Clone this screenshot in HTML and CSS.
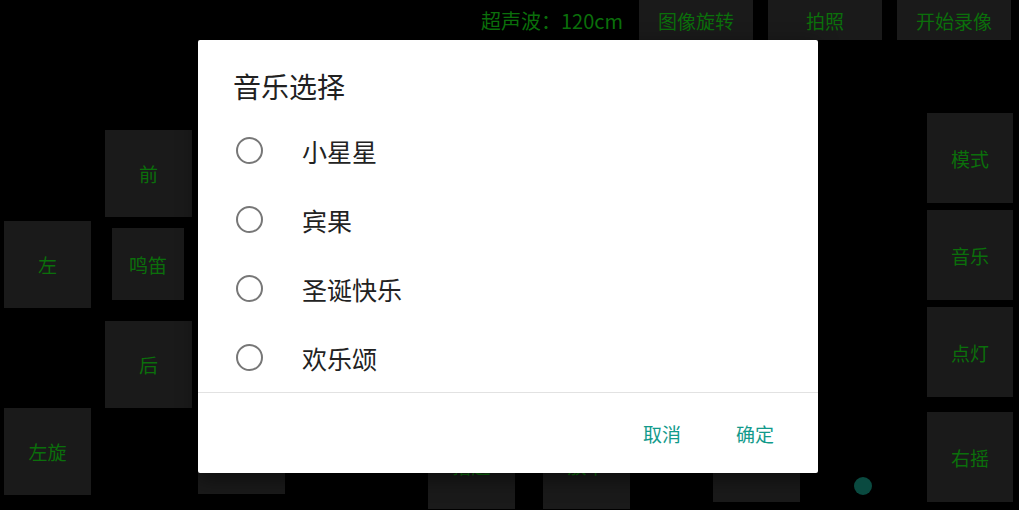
FILE: index.html
```html
<!DOCTYPE html>
<html lang="zh-CN">
<head>
    <meta charset="UTF-8">
    <meta name="viewport" content="width=device-width, initial-scale=1.0">
    <title>小车控制</title>
    <link rel="stylesheet" href="styles.css">
</head>
<body>
    <div class="screen">
        <div class="top-bar">
            <span class="distance">超声波：120cm</span>
            <button class="ctrl top-btn">图像旋转</button>
            <button class="ctrl top-btn">拍照</button>
            <button class="ctrl top-btn">开始录像</button>
        </div>

        <div class="pad">
            <button class="ctrl pad-btn btn-front">前</button>
            <button class="ctrl pad-btn btn-left">左</button>
            <button class="ctrl pad-btn btn-horn">鸣笛</button>
            <button class="ctrl pad-btn btn-back">后</button>
            <button class="ctrl pad-btn btn-rotl">左旋</button>
            <button class="ctrl pad-btn btn-rotr">右旋</button>
            <button class="ctrl pad-btn btn-up">抬起</button>
            <button class="ctrl pad-btn btn-down">放下</button>
            <button class="ctrl pad-btn btn-stop">停止</button>
            <span class="status-dot"></span>
        </div>

        <div class="side">
            <button class="ctrl side-btn">模式</button>
            <button class="ctrl side-btn">音乐</button>
            <button class="ctrl side-btn">点灯</button>
            <button class="ctrl side-btn last">右摇</button>
        </div>
    </div>

    <div class="dialog">
        <h2 class="dialog-title">音乐选择</h2>
        <ul class="choices">
            <li class="choice"><span class="radio"></span>小星星</li>
            <li class="choice"><span class="radio"></span>宾果</li>
            <li class="choice"><span class="radio"></span>圣诞快乐</li>
            <li class="choice"><span class="radio"></span>欢乐颂</li>
        </ul>
        <div class="dialog-actions">
            <button class="action">取消</button>
            <button class="action">确定</button>
        </div>
    </div>
</body>
</html>
```

FILE: styles.css
```css
body {
    margin: 0;
    width: 1019px;
    height: 510px;
    overflow: hidden;
    background: #000;
    font-family: "Noto Sans CJK SC", "Noto Sans", sans-serif;
}
.screen {
    position: relative;
    width: 1019px;
    height: 510px;
}
.ctrl {
    border: none;
    padding: 0;
    background: #1a1a1a;
    color: #0b6f0b;
    font-family: inherit;
    font-size: 19px;
}
.top-bar {
    display: flex;
    justify-content: flex-end;
    align-items: center;
    gap: 15px;
    padding-right: 8px;
    height: 40px;
}
.distance {
    color: #0b6f0b;
    font-size: 20px;
    margin-right: 1px;
}
.top-btn {
    width: 114px;
    height: 40px;
}

/* free canvas of the drive pad */
.pad-btn {
    position: absolute;
    width: 87px;
    height: 87px;
}
.btn-front { left: 105px; top: 130px; }
.btn-left  { left: 4px;   top: 221px; }
.btn-horn  { left: 112px; top: 228px; width: 72px; height: 72px; }
.btn-back  { left: 105px; top: 321px; }
.btn-rotl  { left: 4px;   top: 408px; }
.btn-rotr  { left: 198px; top: 407px; }
.btn-up    { left: 428px; top: 422px; }
.btn-down  { left: 543px; top: 422px; }
.btn-stop  { left: 713px; top: 415px; }
.status-dot {
    position: absolute;
    left: 854px;
    top: 477px;
    width: 18px;
    height: 18px;
    border-radius: 50%;
    background: #0a4a40;
}

.side {
    position: absolute;
    right: 6px;
    top: 113px;
    display: flex;
    flex-direction: column;
    gap: 7px;
}
.side-btn {
    width: 86px;
    height: 90px;
}
.side-btn.last {
    margin-top: 8px;
}

.dialog {
    position: absolute;
    left: 198px;
    top: 40px;
    width: 620px;
    height: 433px;
    background: #fff;
    border-radius: 2px;
    box-shadow: 0 6px 20px rgba(0, 0, 0, 0.5);
    display: flex;
    flex-direction: column;
}
.dialog-title {
    margin: 0;
    padding: 30px 35px 14px;
    height: 32px;
    line-height: 32px;
    font-size: 28px;
    font-weight: normal;
    color: #212121;
}
.choices {
    list-style: none;
    margin: 0;
    padding: 0;
    border-bottom: 1px solid #e2e2e2;
}
.choice {
    display: flex;
    align-items: center;
    height: 69px;
    padding-left: 38px;
    font-size: 25px;
    color: #222;
}
.radio {
    box-sizing: border-box;
    width: 27px;
    height: 27px;
    border: 2.5px solid #777;
    border-radius: 50%;
    margin-right: 39px;
}
.dialog-actions {
    flex: 1;
    display: flex;
    justify-content: flex-end;
    align-items: center;
    gap: 55px;
    padding: 0 44px 0 0;
}
.action {
    border: none;
    background: none;
    padding: 0;
    font-family: inherit;
    font-size: 19px;
    color: #129a8b;
}
```
